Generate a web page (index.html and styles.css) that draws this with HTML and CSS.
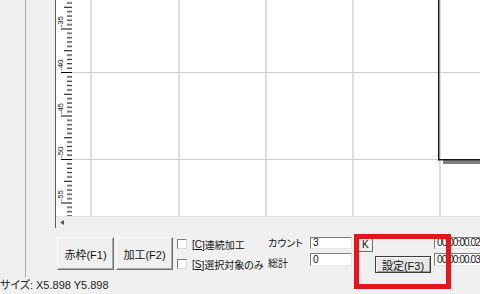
FILE: index.html
```html
<!DOCTYPE html>
<html lang="ja">
<head>
    <meta charset="UTF-8">
    <meta name="viewport" content="width=device-width, initial-scale=1.0">
    <title>加工</title>
    <link rel="stylesheet" href="styles.css">
</head>
<body>
    <div class="main">
        <div class="sidebar"></div>
        <div class="work">
            <div class="view">
                <div class="canvas">
                    <!-- ruler: 5 units = 43.5px, ticks every half unit -->
                    <svg class="ruler" width="16" height="216">
                        <defs>
                            <pattern id="ticks" width="16" height="43.5" y="28.5" patternUnits="userSpaceOnUse">
                                <rect x="5" y="0" width="11" height="1"/>
                                <rect x="11" y="4.35" width="5" height="1"/>
                                <rect x="11" y="8.7" width="5" height="1"/>
                                <rect x="11" y="13.05" width="5" height="1"/>
                                <rect x="11" y="17.4" width="5" height="1"/>
                                <rect x="8" y="21.75" width="8" height="1"/>
                                <rect x="11" y="26.1" width="5" height="1"/>
                                <rect x="11" y="30.45" width="5" height="1"/>
                                <rect x="11" y="34.8" width="5" height="1"/>
                                <rect x="11" y="39.15" width="5" height="1"/>
                            </pattern>
                        </defs>
                        <rect width="16" height="216" fill="#fff"/>
                        <rect width="16" height="216" fill="url(#ticks)"/>
                        <text transform="translate(7 27.5) rotate(-90)">-35</text>
                        <text transform="translate(7 71) rotate(-90)">-40</text>
                        <text transform="translate(7 114.5) rotate(-90)">-45</text>
                        <text transform="translate(7 158) rotate(-90)">-50</text>
                        <text transform="translate(7 201.5) rotate(-90)">-55</text>
                    </svg>
                    <svg class="sheet" width="408" height="216">
                        <g class="grid-v">
                            <rect x="18" y="0" width="2" height="216"/>
                            <rect x="106" y="0" width="2" height="216"/>
                            <rect x="193" y="0" width="2" height="216"/>
                            <rect x="280" y="0" width="2" height="216"/>
                            <rect x="367" y="0" width="2" height="216"/>
                        </g>
                        <g class="grid-h">
                            <rect x="0" y="72" width="408" height="1"/>
                            <rect x="0" y="159" width="408" height="1"/>
                        </g>
                        <!-- work piece outline -->
                        <rect x="371" y="160" width="37" height="4" fill="#808080"/>
                        <rect x="366" y="0" width="1.4" height="160.4" fill="#161616"/>
                        <rect x="366" y="159" width="42" height="1.4" fill="#161616"/>
                    </svg>
                </div>
                <div class="hscroll">
                    <svg width="4" height="5"><polygon points="4,0 0,2.5 4,5" fill="#555"/></svg>
                </div>
            </div>

            <div class="controls">
                <button class="btn">赤枠(F1)</button>
                <button class="btn">加工(F2)</button>

                <div class="checks">
                    <label class="check"><span class="box"></span>[<u>C</u>]連続加工</label>
                    <label class="check"><span class="box"></span>[<u>S</u>]選択対象のみ</label>
                </div>

                <div class="labels">
                    <div class="row">カウント</div>
                    <div class="row">総計</div>
                </div>

                <div class="fields">
                    <div class="field">3</div>
                    <div class="field tall">0</div>
                </div>

                <button class="kbtn">K</button>
                <button class="setbtn">設定(F3)</button>

                <div class="fields times">
                    <div class="field">00:00:00.02</div>
                    <div class="field tall">00:00:00.03</div>
                </div>
            </div>
        </div>
    </div>

    <div class="status">サイズ: X5.898 Y5.898</div>

    <div class="mark"></div>
</body>
</html>
```

FILE: styles.css
```css
* {
    box-sizing: border-box;
}
body {
    margin: 0;
    width: 480px;
    height: 294px;
    overflow: hidden;
    position: relative;
    background-color: #f0f0f0;
    font-family: "Liberation Sans", "Noto Sans CJK JP", sans-serif;
    font-size: 11px;
    font-feature-settings: "palt";
    color: #111;
}
.main {
    display: flex;
    height: 277px;
}
.sidebar {
    width: 26px;
    flex: none;
    border-right: 1px solid #acacac;
}
.work {
    flex: 1;
    min-width: 0;
    display: flex;
    flex-direction: column;
}
.view {
    margin-left: 29px;
    height: 228px;
    border-left: 1px solid #5c5c5c;
    display: flex;
    flex-direction: column;
}
.canvas {
    height: 216px;
    display: flex;
    background-color: #fff;
}
.ruler, .sheet {
    display: block;
    flex: none;
}
.ruler text {
    font-family: "Liberation Sans", sans-serif;
    font-size: 8px;
    fill: #111;
}
.grid-v rect {
    fill: #dedede;
}
.grid-h rect {
    fill: #cdcdcd;
}
.hscroll {
    height: 12px;
    background-color: #f0f0f0;
    border-top: 1px solid #e4e4e4;
    padding: 3px 0 0 4px;
}
.hscroll svg {
    display: block;
}
.controls {
    height: 49px;
    display: flex;
    align-items: flex-start;
    padding: 9px 0 0 31px;
}
button {
    font: inherit;
    color: #111;
    padding: 0;
    cursor: pointer;
}
.btn {
    width: 57px;
    height: 33px;
    flex: none;
    background-color: #f0f0f0;
    border: 1px solid;
    border-color: #fff #6e6e6e #6e6e6e #fff;
    box-shadow: inset -1px -1px #a8a8a8;
}
.btn + .btn {
    margin-left: 2px;
}
.checks {
    width: 91px;
    flex: none;
    margin-left: 4px;
    padding-top: 1px;
    display: flex;
    flex-direction: column;
    gap: 8px;
    font-size: 10px;
}
.check {
    display: flex;
    align-items: center;
    height: 12px;
    white-space: nowrap;
}
.check u {
    text-decoration-thickness: 1px;
    text-underline-offset: 1px;
}
.box {
    width: 10px;
    height: 10px;
    flex: none;
    margin-right: 5px;
    background-color: #fff;
    border: 1px solid;
    border-color: #7c7c7c #d8d8d8 #d8d8d8 #7c7c7c;
}
.labels {
    width: 42px;
    flex: none;
    padding-top: 1px;
    display: flex;
    flex-direction: column;
    gap: 8px;
    font-size: 10px;
}
.labels .row {
    height: 12px;
    line-height: 12px;
    white-space: nowrap;
}
.fields {
    width: 42px;
    flex: none;
    display: flex;
    flex-direction: column;
    gap: 4px;
    font-size: 10px;
}
.field {
    height: 12px;
    line-height: 10px;
    padding-left: 2px;
    background-color: #fff;
    border: 1px solid;
    border-color: #7c7c7c #e6e6e6 #e6e6e6 #7c7c7c;
    white-space: nowrap;
    overflow: hidden;
}
.field.tall {
    height: 13px;
    line-height: 11px;
}
.kbtn {
    width: 16px;
    height: 17px;
    flex: none;
    margin: -2px 0 0 5px;
    text-align: left;
    padding-left: 4px;
    padding-top: 2px;
    font-size: 10px;
    background-color: #f0f0f0;
    border: 1px solid;
    border-color: #fff #6e6e6e #6e6e6e #fff;
}
.setbtn {
    width: 56px;
    height: 17px;
    flex: none;
    margin: 19px 0 0 2px;
    background-color: #e6e6e6;
    border: 1px solid #3c3c3c;
    box-shadow: inset 1px 1px #fff, inset -1px -1px #9a9a9a;
}
.times {
    width: 50px;
    margin-left: 3px;
    font-size: 10px;
    letter-spacing: -0.9px;
}
.status {
    height: 17px;
    line-height: 17px;
    white-space: nowrap;
    color: #222;
}
.mark {
    position: absolute;
    left: 354px;
    top: 234px;
    width: 97px;
    height: 55px;
    border: 5px solid #e2161f;
}
```
